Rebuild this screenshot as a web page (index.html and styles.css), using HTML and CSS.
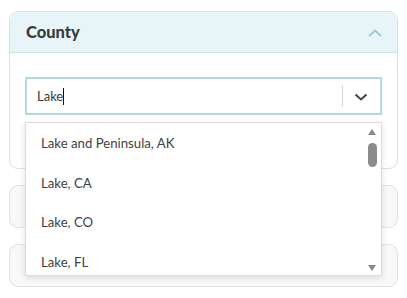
FILE: index.html
```html
<!DOCTYPE html>
<html lang="en">
    <head>
        <title>County filter</title>
        <link rel="stylesheet" href="styles.css">
    </head>
    <body>
        <div class="filters">
            <div class="card open">
                <div class="card-header">
                    <span class="card-title">County</span>
                    <svg class="chevron-up" width="14" height="8" viewBox="0 0 14 8"><path d="M1 7 L7 1.5 L13 7" fill="none" stroke="#94c9d8" stroke-width="1.8"/></svg>
                </div>
                <div class="card-body">
                    <div class="select">
                        <div class="select-control">
                            <span class="select-value">Lake</span><span class="caret"></span>
                            <span class="select-sep"></span>
                            <svg class="chevron-down" width="14" height="8" viewBox="0 0 14 8"><path d="M1.5 1.5 L7 6.5 L12.5 1.5" fill="none" stroke="#444" stroke-width="2"/></svg>
                        </div>
                        <div class="select-menu">
                            <ul class="options">
                                <li>Lake and Peninsula, AK</li>
                                <li>Lake, CA</li>
                                <li>Lake, CO</li>
                                <li>Lake, FL</li>
                            </ul>
                            <div class="scrollbar">
                                <span class="arrow-up"></span>
                                <span class="thumb"></span>
                                <span class="track"></span>
                                <span class="arrow-down"></span>
                            </div>
                        </div>
                    </div>
                </div>
            </div>
            <div class="card closed"></div>
            <div class="card closed"></div>
        </div>
    </body>
</html>
```
FILE: styles.css
```css
body {
    margin: 0;
    font-family: "Lato", "Noto Sans", sans-serif;
    background: #fff;
    color: #444;
}

.filters {
    width: 389px;
    padding: 11px 9px;
    display: flex;
    flex-direction: column;
    gap: 16px;
}

.card {
    border: 1px solid #e0e3e4;
    border-radius: 9px;
    background: #f8f8f8;
}

.card.open {
    border-color: #d3e3e8;
    background: #fff;
}

.card.closed {
    height: 41px;
}

.card-header {
    height: 40px;
    display: flex;
    align-items: center;
    justify-content: space-between;
    padding: 0 15px 0 16px;
    background: #e8f5f8;
    border-bottom: 1px solid #cfe2e8;
    border-radius: 8px 8px 0 0;
}

.card-title {
    font-size: 16.5px;
    font-weight: 900;
    color: #3b3b3b;
}

.chevron-up {
    margin-top: 1px;
}

.card-body {
    padding: 24px 15px 53px 15px;
}

.select {
    position: relative;
}

.select-control {
    height: 34px;
    border: 2px solid #b2d9e3;
    display: flex;
    align-items: center;
    padding-left: 10px;
}

.select-value {
    font-size: 13px;
    color: #3a3a3a;
}

.caret {
    width: 1px;
    height: 17px;
    background: #111;
}

.select-sep {
    margin-left: auto;
    width: 1px;
    height: 22px;
    background: #d6d6d6;
}

.chevron-down {
    margin: 1px 12px 0 11px;
}

.select-menu {
    position: absolute;
    top: 45px;
    left: 0;
    right: 0;
    height: 152px;
    background: #fff;
    border: 1px solid #dcdcdc;
    box-shadow: 0 2px 6px rgba(0, 0, 0, 0.12);
    display: flex;
    overflow: hidden;
}

.options {
    list-style: none;
    margin: 0;
    padding: 0;
    flex: 1;
}

.options li {
    height: 39.5px;
    line-height: 40px;
    padding-left: 15px;
    font-size: 13.2px;
    color: #3f3f3f;
}

.scrollbar {
    width: 12px;
    margin-right: 3px;
    display: flex;
    flex-direction: column;
    align-items: center;
    padding: 6px 0 4px;
}

.arrow-up, .arrow-down {
    width: 0;
    height: 0;
    border-left: 4.5px solid transparent;
    border-right: 4.5px solid transparent;
}

.arrow-up {
    border-bottom: 6px solid #8a8a8a;
}

.arrow-down {
    border-top: 6px solid #8a8a8a;
}

.thumb {
    margin-top: 8px;
    width: 9px;
    height: 24px;
    border-radius: 5px;
    background: #8c8c8c;
}

.track {
    flex: 1;
}
```
